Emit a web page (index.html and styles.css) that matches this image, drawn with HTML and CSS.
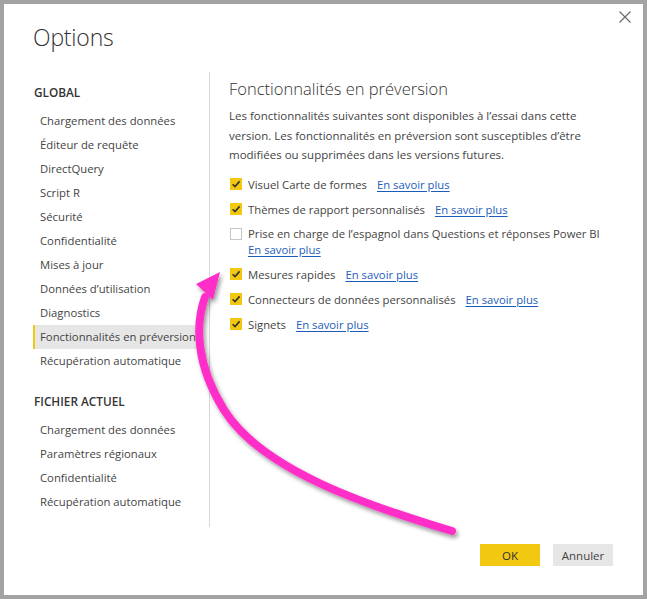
FILE: index.html
```html
<!DOCTYPE html>
<html lang="fr">
<head>
<meta charset="utf-8">
<title>Options</title>
<link rel="stylesheet" href="styles.css">
</head>
<body>
<div class="dialog">
  <div class="header">
    <h1 class="title">Options</h1>
    <button class="close" aria-label="Fermer">
      <svg width="12" height="12" viewBox="0 0 12 12"><path d="M0.5 0.5 L11.5 11.5 M11.5 0.5 L0.5 11.5" stroke="#6a6a6a" stroke-width="1.2" fill="none"/></svg>
    </button>
  </div>
  <div class="body">
    <nav class="nav">
      <div class="nav-heading">GLOBAL</div>
      <ul class="nav-list">
        <li class="nav-item">Chargement des données</li>
        <li class="nav-item">Éditeur de requête</li>
        <li class="nav-item">DirectQuery</li>
        <li class="nav-item">Script R</li>
        <li class="nav-item">Sécurité</li>
        <li class="nav-item">Confidentialité</li>
        <li class="nav-item">Mises à jour</li>
        <li class="nav-item">Données d’utilisation</li>
        <li class="nav-item">Diagnostics</li>
        <li class="nav-item selected">Fonctionnalités en préversion</li>
        <li class="nav-item">Récupération automatique</li>
      </ul>
      <div class="nav-heading second">FICHIER ACTUEL</div>
      <ul class="nav-list">
        <li class="nav-item">Chargement des données</li>
        <li class="nav-item">Paramètres régionaux</li>
        <li class="nav-item">Confidentialité</li>
        <li class="nav-item">Récupération automatique</li>
      </ul>
    </nav>
    <div class="divider"></div>
    <section class="content">
      <h2 class="content-title">Fonctionnalités en préversion</h2>
      <p class="intro">Les fonctionnalités suivantes sont disponibles à l’essai dans cette<br>version. Les fonctionnalités en préversion sont susceptibles d’être<br>modifiées ou supprimées dans les versions futures.</p>
      <ul class="features">
        <li class="feature"><span class="box checked"><svg viewBox="0 0 12 12"><path d="M2.6 6.2 L5 8.6 L9.6 3.4" stroke="#333" stroke-width="1.6" fill="none"/></svg></span><span class="label">Visuel Carte de formes</span><a class="link" href="#">En savoir plus</a></li>
        <li class="feature"><span class="box checked"><svg viewBox="0 0 12 12"><path d="M2.6 6.2 L5 8.6 L9.6 3.4" stroke="#333" stroke-width="1.6" fill="none"/></svg></span><span class="label">Thèmes de rapport personnalisés</span><a class="link" href="#">En savoir plus</a></li>
        <li class="feature multi"><span class="box"></span><span class="label-block"><span class="label">Prise en charge de l’espagnol dans Questions et réponses Power BI</span><br><a class="link first" href="#">En savoir plus</a></span></li>
        <li class="feature"><span class="box checked"><svg viewBox="0 0 12 12"><path d="M2.6 6.2 L5 8.6 L9.6 3.4" stroke="#333" stroke-width="1.6" fill="none"/></svg></span><span class="label">Mesures rapides</span><a class="link" href="#">En savoir plus</a></li>
        <li class="feature"><span class="box checked"><svg viewBox="0 0 12 12"><path d="M2.6 6.2 L5 8.6 L9.6 3.4" stroke="#333" stroke-width="1.6" fill="none"/></svg></span><span class="label">Connecteurs de données personnalisés</span><a class="link" href="#">En savoir plus</a></li>
        <li class="feature"><span class="box checked"><svg viewBox="0 0 12 12"><path d="M2.6 6.2 L5 8.6 L9.6 3.4" stroke="#333" stroke-width="1.6" fill="none"/></svg></span><span class="label">Signets</span><a class="link" href="#">En savoir plus</a></li>
      </ul>
    </section>
  </div>
  <div class="footer">
    <button class="btn primary">OK</button>
    <button class="btn">Annuler</button>
  </div>
</div>
<svg class="arrow" width="647" height="599" viewBox="0 0 647 599">
  <defs>
    <filter id="sh" x="-20%" y="-20%" width="140%" height="140%">
      <feDropShadow dx="2" dy="3" stdDeviation="2" flood-color="#000" flood-opacity="0.4"/>
    </filter>
  </defs>
  <g filter="url(#sh)">
    <path d="M452 531 C365 505 262 470 224 410 C196 365 195 325 205 297" stroke="#ff2ec8" stroke-width="8" stroke-linecap="round" fill="none"/>
    <polygon points="220,272 196,284 213,300" fill="#ff2ec8"/>
  </g>
</svg>
</body>
</html>
```

FILE: styles.css
```css
* { box-sizing: border-box; }
html, body { margin: 0; padding: 0; }
body {
  width: 647px;
  height: 599px;
  background: #a3a3a3;
  padding: 4px;
  font-family: "Open Sans", "Noto Sans", sans-serif;
  color: #444;
  position: relative;
  overflow: hidden;
}
.dialog {
  width: 639px;
  height: 591px;
  background: #fff;
  display: flex;
  flex-direction: column;
}
.header {
  height: 68px;
  padding: 18px 12px 0 29px;
  display: flex;
  justify-content: space-between;
  align-items: flex-start;
}
.title {
  margin: 0;
  font-size: 23px;
  line-height: 30px;
  font-weight: 300;
  color: #333;
  letter-spacing: -0.2px;
}
.close {
  border: 0;
  background: none;
  padding: 0;
  margin-top: -11px;
  width: 12px;
  height: 12px;
  display: block;
}
.close svg { display: block; }
.body {
  display: flex;
  height: 455px;
}
.nav {
  width: 205px;
  padding: 8px 0 0 29px;
  flex: none;
}
.nav-heading {
  font-size: 11.8px;
  line-height: 24px;
  font-weight: 600;
  color: #333;
  padding-left: 1px;
  margin-bottom: 5px;
}
.nav-heading.second { margin-top: 15.5px; }
.nav-list {
  list-style: none;
  margin: 0;
  padding: 0;
  width: 163px;
}
.nav-item {
  font-size: 11.3px;
  line-height: 24px;
  height: 24px;
  padding-left: 5px;
  color: #444;
  white-space: nowrap;
  overflow: hidden;
  border-left: 2px solid transparent;
}
.nav-item.selected {
  background: #e6e6e6;
  border-left-color: #f2c811;
}
.divider {
  width: 1px;
  background: #d9d9d9;
  flex: none;
}
.content {
  padding: 5px 0 0 19px;
  flex: 1;
}
.content-title {
  margin: 0;
  font-size: 16.5px;
  line-height: 24px;
  font-weight: 300;
  color: #333;
}
.intro {
  margin: 5px 0 0 0;
  font-size: 11.5px;
  line-height: 19.5px;
  color: #444;
}
.features {
  list-style: none;
  margin: 11px 0 0 0;
  padding: 0;
}
.feature {
  display: flex;
  align-items: flex-start;
  font-size: 11.3px;
  line-height: 17px;
  margin-bottom: 8px;
  white-space: nowrap;
}
.feature.multi {
  line-height: 16.5px;
  margin-bottom: 7px;
}
.box {
  width: 12px;
  height: 12px;
  margin: 2.5px 6px 0 1px;
  flex: none;
  border: 1px solid #c6c6c6;
  background: #fff;
  display: block;
}
.box.checked {
  border: 0;
  background: #f2c811;
}
.box svg { display: block; width: 12px; height: 12px; }
.label { color: #444; }
.link {
  color: #1d5cbd;
  text-decoration: underline;
  text-underline-offset: 2px;
  margin-left: 10px;
}
.link.first { margin-left: 0; }
.footer {
  display: flex;
  justify-content: flex-end;
  gap: 13px;
  padding: 17px 30px 0 0;
}
.btn {
  width: 60px;
  height: 22px;
  border: 0;
  background: #e6e6e6;
  font-family: "Open Sans", "Noto Sans", sans-serif;
  font-size: 11.5px;
  color: #444;
  padding: 0;
}
.btn.primary { background: #f2c811; color: #333; }
.arrow {
  position: absolute;
  left: 0;
  top: 0;
  pointer-events: none;
}
```
